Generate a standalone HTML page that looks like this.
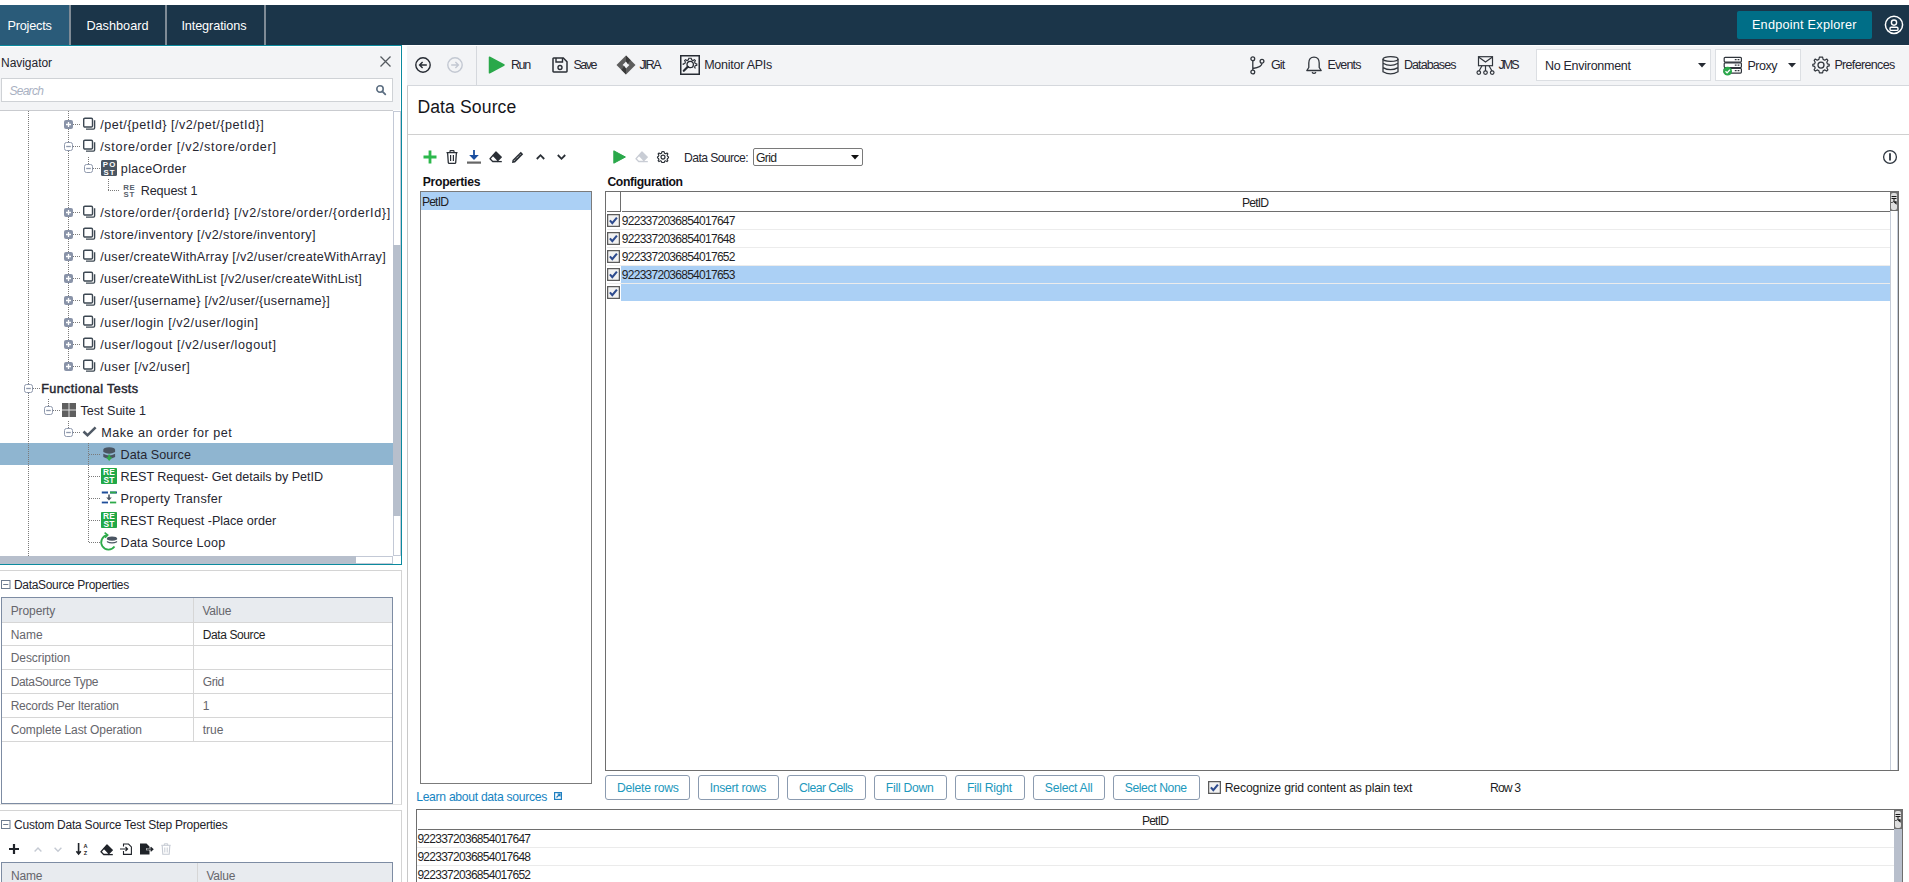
<!DOCTYPE html>
<html><head><meta charset="utf-8"><style>
html,body{margin:0;padding:0;}
body{width:1909px;height:882px;overflow:hidden;position:relative;background:#ffffff;font-family:"Liberation Sans", sans-serif;}
.a{position:absolute;}
.t{white-space:nowrap;}
svg.a{overflow:visible;}
</style></head><body>
<div class="a" style="left:0px;top:0px;width:1909px;height:5px;background:#ffffff;"></div>
<div class="a" style="left:0px;top:5px;width:1909px;height:40px;background:#1b3549;"></div>
<div class="a" style="left:0px;top:5px;width:69px;height:40px;background:#2a5b79;"></div>
<div class="a" style="left:69px;top:5px;width:2px;height:40px;background:#7f8b96;"></div>
<div class="a" style="left:165px;top:5px;width:2px;height:40px;background:#7f8b96;"></div>
<div class="a" style="left:264px;top:5px;width:2px;height:40px;background:#7f8b96;"></div>
<div class="a" style="left:0px;top:45px;width:402px;height:1px;background:#0b8a9e;"></div>
<div class="a" style="left:402px;top:45px;width:1507px;height:1px;background:#ffffff;"></div>
<div class="a t" id="t0" style="letter-spacing:-0.204px;left:7.40px;top:19.80px;font-size:12.7px;line-height:12.7px;color:#ffffff;">Projects</div>
<div class="a t" id="t1" style="letter-spacing:0.005px;left:86.40px;top:19.80px;font-size:12.7px;line-height:12.7px;color:#ffffff;">Dashboard</div>
<div class="a t" id="t2" style="letter-spacing:-0.109px;left:181.40px;top:19.80px;font-size:12.7px;line-height:12.7px;color:#ffffff;">Integrations</div>
<div class="a" style="left:1737px;top:11px;width:135px;height:28px;background:#006e87;border-radius:2px;"></div>
<div class="a t" id="t3" style="letter-spacing:0.235px;left:1751.90px;top:18.80px;font-size:12.7px;line-height:12.7px;color:#ffffff;">Endpoint Explorer</div>
<svg class="a" style="left:1884px;top:15px;" width="20" height="20" viewBox="0 0 20 20"><circle cx="10" cy="9.8" r="8.6" fill="none" stroke="#fff" stroke-width="1.5"/><circle cx="10" cy="7.6" r="2.6" fill="none" stroke="#fff" stroke-width="1.4"/><rect x="6" y="12.2" width="8" height="3.2" rx="1.2" fill="none" stroke="#fff" stroke-width="1.4"/></svg>
<div class="a" style="left:0px;top:46px;width:401px;height:64px;background:#f3f4f6;"></div>
<div class="a" style="left:0px;top:110px;width:393px;height:1px;background:#c9cbcf;"></div>
<div class="a" style="left:0px;top:46px;width:401px;height:1px;background:#ffffff;"></div>
<div class="a" style="left:400px;top:46px;width:1px;height:64px;background:#ffffff;"></div>
<div class="a t" id="t4" style="letter-spacing:-0.037px;left:1.00px;top:57.40px;font-size:12px;line-height:12px;color:#24242c;">Navigator</div>
<svg class="a" style="left:380px;top:56px;" width="11" height="11" viewBox="0 0 11 11"><path d="M0.5 0.5 L10.5 10.5 M10.5 0.5 L0.5 10.5" stroke="#555a60" stroke-width="1.3"/></svg>
<div class="a" style="left:1px;top:78px;width:392px;height:24px;background:#ffffff;border:1px solid #cfd2d6;box-sizing:border-box;"></div>
<div class="a t" id="t5" style="letter-spacing:-0.714px;left:9.40px;top:85.40px;font-size:12px;line-height:12px;color:#a9b1c2;font-style:italic;">Search</div>
<svg class="a" style="left:376px;top:85px;" width="10" height="10" viewBox="0 0 10 10"><circle cx="4" cy="4" r="3.2" fill="none" stroke="#5d6f82" stroke-width="1.6"/><path d="M6.3 6.3 L9.3 9.3" stroke="#5d6f82" stroke-width="1.8" stroke-linecap="round"/></svg>
<div class="a" style="left:0px;top:111px;width:393px;height:445px;background:#ffffff;"></div>
<div class="a" style="left:401px;top:46px;width:1px;height:519px;background:#0b8a9e;"></div>
<div class="a" style="left:0px;top:564px;width:402px;height:1px;background:#0b8a9e;"></div>
<div class="a" style="left:402px;top:46px;width:5px;height:836px;background:#ffffff;"></div>
<div class="a" style="left:393px;top:111px;width:8px;height:445px;background:#ffffff;border:1px solid #c3c9d6;box-sizing:border-box;"></div>
<div class="a" style="left:393px;top:245px;width:8px;height:271px;background:#b7bfcc;"></div>
<div class="a" style="left:0px;top:556px;width:393px;height:8px;background:#ffffff;border:1px solid #c3c9d6;box-sizing:border-box;"></div>
<div class="a" style="left:0px;top:556px;width:356px;height:8px;background:#b7bfcc;"></div>
<div class="a" style="left:393px;top:556px;width:8px;height:8px;background:#ffffff;"></div>
<div class="a" style="left:0px;top:443px;width:393px;height:22px;background:#8fb5d0;"></div>
<div class="a" style="left:28px;top:111px;width:1px;height:445px;background:repeating-linear-gradient(to bottom,#7a7a7a 0,#7a7a7a 1px,transparent 1px,transparent 2px);"></div>
<div class="a" style="left:68px;top:111px;width:1px;height:255px;background:repeating-linear-gradient(to bottom,#7a7a7a 0,#7a7a7a 1px,transparent 1px,transparent 2px);"></div>
<div class="a" style="left:88px;top:157px;width:1px;height:7px;background:repeating-linear-gradient(to bottom,#7a7a7a 0,#7a7a7a 1px,transparent 1px,transparent 2px);"></div>
<div class="a" style="left:108px;top:179px;width:1px;height:11px;background:repeating-linear-gradient(to bottom,#7a7a7a 0,#7a7a7a 1px,transparent 1px,transparent 2px);"></div>
<div class="a" style="left:108px;top:190px;width:12px;height:1px;background:repeating-linear-gradient(to right,#7a7a7a 0,#7a7a7a 1px,transparent 1px,transparent 2px);"></div>
<div class="a" style="left:48px;top:399px;width:1px;height:7px;background:repeating-linear-gradient(to bottom,#7a7a7a 0,#7a7a7a 1px,transparent 1px,transparent 2px);"></div>
<div class="a" style="left:68px;top:421px;width:1px;height:7px;background:repeating-linear-gradient(to bottom,#7a7a7a 0,#7a7a7a 1px,transparent 1px,transparent 2px);"></div>
<div class="a" style="left:88px;top:443px;width:1px;height:100px;background:repeating-linear-gradient(to bottom,#7a7a7a 0,#7a7a7a 1px,transparent 1px,transparent 2px);"></div>
<div class="a" style="left:89px;top:454px;width:11px;height:1px;background:repeating-linear-gradient(to right,#7a7a7a 0,#7a7a7a 1px,transparent 1px,transparent 2px);"></div>
<div class="a" style="left:89px;top:476px;width:11px;height:1px;background:repeating-linear-gradient(to right,#7a7a7a 0,#7a7a7a 1px,transparent 1px,transparent 2px);"></div>
<div class="a" style="left:89px;top:498px;width:11px;height:1px;background:repeating-linear-gradient(to right,#7a7a7a 0,#7a7a7a 1px,transparent 1px,transparent 2px);"></div>
<div class="a" style="left:89px;top:520px;width:11px;height:1px;background:repeating-linear-gradient(to right,#7a7a7a 0,#7a7a7a 1px,transparent 1px,transparent 2px);"></div>
<div class="a" style="left:89px;top:542px;width:11px;height:1px;background:repeating-linear-gradient(to right,#7a7a7a 0,#7a7a7a 1px,transparent 1px,transparent 2px);"></div>
<div class="a" style="left:73px;top:124px;width:8px;height:1px;background:repeating-linear-gradient(to right,#7a7a7a 0,#7a7a7a 1px,transparent 1px,transparent 2px);"></div>
<svg class="a" style="left:64px;top:120px;" width="9" height="9" viewBox="0 0 9 9"><rect x="0" y="0" width="9" height="9" rx="2" fill="#8993a8"/><path d="M2 4.5 H7 M4.5 2 V7" stroke="#fff" stroke-width="1.3"/></svg>
<svg class="a" style="left:83px;top:117px;" width="13" height="13" viewBox="0 0 13 13"><rect x="0.7" y="1.2" width="8.8" height="8.8" rx="1.2" fill="none" stroke="#3d4853" stroke-width="1.4"/><path d="M11.6 3.2 V11 Q11.6 12.1 10.5 12.1 H3" fill="none" stroke="#3d4853" stroke-width="1.4"/></svg>
<div class="a t" id="t6" style="letter-spacing:0.495px;left:100.20px;top:118.89px;font-size:12.6px;line-height:12.6px;color:#262630;">/pet/{petId} [/v2/pet/{petId}]</div>
<div class="a" style="left:73px;top:146px;width:8px;height:1px;background:repeating-linear-gradient(to right,#7a7a7a 0,#7a7a7a 1px,transparent 1px,transparent 2px);"></div>
<svg class="a" style="left:64px;top:142px;" width="9" height="9" viewBox="0 0 9 9"><rect x="0.5" y="0.5" width="8" height="8" rx="2" fill="#fff" stroke="#8f99ad" stroke-width="1"/><path d="M2.2 4.5 H6.8" stroke="#8f99ad" stroke-width="1.3"/></svg>
<svg class="a" style="left:83px;top:139px;" width="13" height="13" viewBox="0 0 13 13"><rect x="0.7" y="1.2" width="8.8" height="8.8" rx="1.2" fill="none" stroke="#3d4853" stroke-width="1.4"/><path d="M11.6 3.2 V11 Q11.6 12.1 10.5 12.1 H3" fill="none" stroke="#3d4853" stroke-width="1.4"/></svg>
<div class="a t" id="t7" style="letter-spacing:0.676px;left:100.20px;top:140.89px;font-size:12.6px;line-height:12.6px;color:#262630;">/store/order [/v2/store/order]</div>
<div class="a" style="left:73px;top:212px;width:8px;height:1px;background:repeating-linear-gradient(to right,#7a7a7a 0,#7a7a7a 1px,transparent 1px,transparent 2px);"></div>
<svg class="a" style="left:64px;top:208px;" width="9" height="9" viewBox="0 0 9 9"><rect x="0" y="0" width="9" height="9" rx="2" fill="#8993a8"/><path d="M2 4.5 H7 M4.5 2 V7" stroke="#fff" stroke-width="1.3"/></svg>
<svg class="a" style="left:83px;top:205px;" width="13" height="13" viewBox="0 0 13 13"><rect x="0.7" y="1.2" width="8.8" height="8.8" rx="1.2" fill="none" stroke="#3d4853" stroke-width="1.4"/><path d="M11.6 3.2 V11 Q11.6 12.1 10.5 12.1 H3" fill="none" stroke="#3d4853" stroke-width="1.4"/></svg>
<div class="a t" id="t8" style="letter-spacing:0.618px;left:100.20px;top:206.89px;font-size:12.6px;line-height:12.6px;color:#262630;">/store/order/{orderId} [/v2/store/order/{orderId}]</div>
<div class="a" style="left:73px;top:234px;width:8px;height:1px;background:repeating-linear-gradient(to right,#7a7a7a 0,#7a7a7a 1px,transparent 1px,transparent 2px);"></div>
<svg class="a" style="left:64px;top:230px;" width="9" height="9" viewBox="0 0 9 9"><rect x="0" y="0" width="9" height="9" rx="2" fill="#8993a8"/><path d="M2 4.5 H7 M4.5 2 V7" stroke="#fff" stroke-width="1.3"/></svg>
<svg class="a" style="left:83px;top:227px;" width="13" height="13" viewBox="0 0 13 13"><rect x="0.7" y="1.2" width="8.8" height="8.8" rx="1.2" fill="none" stroke="#3d4853" stroke-width="1.4"/><path d="M11.6 3.2 V11 Q11.6 12.1 10.5 12.1 H3" fill="none" stroke="#3d4853" stroke-width="1.4"/></svg>
<div class="a t" id="t9" style="letter-spacing:0.430px;left:100.20px;top:228.89px;font-size:12.6px;line-height:12.6px;color:#262630;">/store/inventory [/v2/store/inventory]</div>
<div class="a" style="left:73px;top:256px;width:8px;height:1px;background:repeating-linear-gradient(to right,#7a7a7a 0,#7a7a7a 1px,transparent 1px,transparent 2px);"></div>
<svg class="a" style="left:64px;top:252px;" width="9" height="9" viewBox="0 0 9 9"><rect x="0" y="0" width="9" height="9" rx="2" fill="#8993a8"/><path d="M2 4.5 H7 M4.5 2 V7" stroke="#fff" stroke-width="1.3"/></svg>
<svg class="a" style="left:83px;top:249px;" width="13" height="13" viewBox="0 0 13 13"><rect x="0.7" y="1.2" width="8.8" height="8.8" rx="1.2" fill="none" stroke="#3d4853" stroke-width="1.4"/><path d="M11.6 3.2 V11 Q11.6 12.1 10.5 12.1 H3" fill="none" stroke="#3d4853" stroke-width="1.4"/></svg>
<div class="a t" id="t10" style="letter-spacing:0.312px;left:100.20px;top:250.89px;font-size:12.6px;line-height:12.6px;color:#262630;">/user/createWithArray [/v2/user/createWithArray]</div>
<div class="a" style="left:73px;top:278px;width:8px;height:1px;background:repeating-linear-gradient(to right,#7a7a7a 0,#7a7a7a 1px,transparent 1px,transparent 2px);"></div>
<svg class="a" style="left:64px;top:274px;" width="9" height="9" viewBox="0 0 9 9"><rect x="0" y="0" width="9" height="9" rx="2" fill="#8993a8"/><path d="M2 4.5 H7 M4.5 2 V7" stroke="#fff" stroke-width="1.3"/></svg>
<svg class="a" style="left:83px;top:271px;" width="13" height="13" viewBox="0 0 13 13"><rect x="0.7" y="1.2" width="8.8" height="8.8" rx="1.2" fill="none" stroke="#3d4853" stroke-width="1.4"/><path d="M11.6 3.2 V11 Q11.6 12.1 10.5 12.1 H3" fill="none" stroke="#3d4853" stroke-width="1.4"/></svg>
<div class="a t" id="t11" style="letter-spacing:0.261px;left:100.20px;top:272.89px;font-size:12.6px;line-height:12.6px;color:#262630;">/user/createWithList [/v2/user/createWithList]</div>
<div class="a" style="left:73px;top:300px;width:8px;height:1px;background:repeating-linear-gradient(to right,#7a7a7a 0,#7a7a7a 1px,transparent 1px,transparent 2px);"></div>
<svg class="a" style="left:64px;top:296px;" width="9" height="9" viewBox="0 0 9 9"><rect x="0" y="0" width="9" height="9" rx="2" fill="#8993a8"/><path d="M2 4.5 H7 M4.5 2 V7" stroke="#fff" stroke-width="1.3"/></svg>
<svg class="a" style="left:83px;top:293px;" width="13" height="13" viewBox="0 0 13 13"><rect x="0.7" y="1.2" width="8.8" height="8.8" rx="1.2" fill="none" stroke="#3d4853" stroke-width="1.4"/><path d="M11.6 3.2 V11 Q11.6 12.1 10.5 12.1 H3" fill="none" stroke="#3d4853" stroke-width="1.4"/></svg>
<div class="a t" id="t12" style="letter-spacing:0.283px;left:100.20px;top:294.89px;font-size:12.6px;line-height:12.6px;color:#262630;">/user/{username} [/v2/user/{username}]</div>
<div class="a" style="left:73px;top:322px;width:8px;height:1px;background:repeating-linear-gradient(to right,#7a7a7a 0,#7a7a7a 1px,transparent 1px,transparent 2px);"></div>
<svg class="a" style="left:64px;top:318px;" width="9" height="9" viewBox="0 0 9 9"><rect x="0" y="0" width="9" height="9" rx="2" fill="#8993a8"/><path d="M2 4.5 H7 M4.5 2 V7" stroke="#fff" stroke-width="1.3"/></svg>
<svg class="a" style="left:83px;top:315px;" width="13" height="13" viewBox="0 0 13 13"><rect x="0.7" y="1.2" width="8.8" height="8.8" rx="1.2" fill="none" stroke="#3d4853" stroke-width="1.4"/><path d="M11.6 3.2 V11 Q11.6 12.1 10.5 12.1 H3" fill="none" stroke="#3d4853" stroke-width="1.4"/></svg>
<div class="a t" id="t13" style="letter-spacing:0.533px;left:100.20px;top:316.89px;font-size:12.6px;line-height:12.6px;color:#262630;">/user/login [/v2/user/login]</div>
<div class="a" style="left:73px;top:344px;width:8px;height:1px;background:repeating-linear-gradient(to right,#7a7a7a 0,#7a7a7a 1px,transparent 1px,transparent 2px);"></div>
<svg class="a" style="left:64px;top:340px;" width="9" height="9" viewBox="0 0 9 9"><rect x="0" y="0" width="9" height="9" rx="2" fill="#8993a8"/><path d="M2 4.5 H7 M4.5 2 V7" stroke="#fff" stroke-width="1.3"/></svg>
<svg class="a" style="left:83px;top:337px;" width="13" height="13" viewBox="0 0 13 13"><rect x="0.7" y="1.2" width="8.8" height="8.8" rx="1.2" fill="none" stroke="#3d4853" stroke-width="1.4"/><path d="M11.6 3.2 V11 Q11.6 12.1 10.5 12.1 H3" fill="none" stroke="#3d4853" stroke-width="1.4"/></svg>
<div class="a t" id="t14" style="letter-spacing:0.579px;left:100.20px;top:338.89px;font-size:12.6px;line-height:12.6px;color:#262630;">/user/logout [/v2/user/logout]</div>
<div class="a" style="left:73px;top:366px;width:8px;height:1px;background:repeating-linear-gradient(to right,#7a7a7a 0,#7a7a7a 1px,transparent 1px,transparent 2px);"></div>
<svg class="a" style="left:64px;top:362px;" width="9" height="9" viewBox="0 0 9 9"><rect x="0" y="0" width="9" height="9" rx="2" fill="#8993a8"/><path d="M2 4.5 H7 M4.5 2 V7" stroke="#fff" stroke-width="1.3"/></svg>
<svg class="a" style="left:83px;top:359px;" width="13" height="13" viewBox="0 0 13 13"><rect x="0.7" y="1.2" width="8.8" height="8.8" rx="1.2" fill="none" stroke="#3d4853" stroke-width="1.4"/><path d="M11.6 3.2 V11 Q11.6 12.1 10.5 12.1 H3" fill="none" stroke="#3d4853" stroke-width="1.4"/></svg>
<div class="a t" id="t15" style="letter-spacing:0.421px;left:100.20px;top:360.89px;font-size:12.6px;line-height:12.6px;color:#262630;">/user [/v2/user]</div>
<div class="a" style="left:93px;top:168px;width:8px;height:1px;background:repeating-linear-gradient(to right,#7a7a7a 0,#7a7a7a 1px,transparent 1px,transparent 2px);"></div>
<svg class="a" style="left:84px;top:164px;" width="9" height="9" viewBox="0 0 9 9"><rect x="0.5" y="0.5" width="8" height="8" rx="2" fill="#fff" stroke="#8f99ad" stroke-width="1"/><path d="M2.2 4.5 H6.8" stroke="#8f99ad" stroke-width="1.3"/></svg>
<svg class="a" style="left:101px;top:160px;" width="16" height="16" viewBox="0 0 16 16"><rect x="0" y="0" width="16" height="16" rx="1.5" fill="#4a5562"/><text x="8.6" y="7.3" font-family="Liberation Sans" font-weight="700" font-size="7.8" fill="#fff" text-anchor="middle" letter-spacing="1.1">PO</text><text x="8.6" y="14.9" font-family="Liberation Sans" font-weight="700" font-size="7.8" fill="#fff" text-anchor="middle" letter-spacing="1.1">ST</text></svg>
<div class="a t" id="t16" style="letter-spacing:0.333px;left:120.80px;top:162.89px;font-size:12.6px;line-height:12.6px;color:#262630;">placeOrder</div>
<svg class="a" style="left:123px;top:183px;" width="12" height="15" viewBox="0 0 12 15"><text x="6.4" y="6.6" font-family="Liberation Sans" font-weight="700" font-size="7.8" fill="#56606b" text-anchor="middle" letter-spacing="0.8">RE</text><text x="6.4" y="14.2" font-family="Liberation Sans" font-weight="700" font-size="7.8" fill="#56606b" text-anchor="middle" letter-spacing="0.8">ST</text></svg>
<div class="a t" id="t17" style="letter-spacing:-0.089px;left:140.70px;top:184.89px;font-size:12.6px;line-height:12.6px;color:#262630;">Request 1</div>
<div class="a" style="left:33px;top:388px;width:8px;height:1px;background:repeating-linear-gradient(to right,#7a7a7a 0,#7a7a7a 1px,transparent 1px,transparent 2px);"></div>
<svg class="a" style="left:24px;top:384px;" width="9" height="9" viewBox="0 0 9 9"><rect x="0.5" y="0.5" width="8" height="8" rx="2" fill="#fff" stroke="#8f99ad" stroke-width="1"/><path d="M2.2 4.5 H6.8" stroke="#8f99ad" stroke-width="1.3"/></svg>
<div class="a t" id="t18" style="letter-spacing:0.408px;left:41.20px;top:382.89px;font-size:12.6px;line-height:12.6px;color:#262630;-webkit-text-stroke:0.45px #262630;">Functional Tests</div>
<div class="a" style="left:53px;top:410px;width:8px;height:1px;background:repeating-linear-gradient(to right,#7a7a7a 0,#7a7a7a 1px,transparent 1px,transparent 2px);"></div>
<svg class="a" style="left:44px;top:406px;" width="9" height="9" viewBox="0 0 9 9"><rect x="0.5" y="0.5" width="8" height="8" rx="2" fill="#fff" stroke="#8f99ad" stroke-width="1"/><path d="M2.2 4.5 H6.8" stroke="#8f99ad" stroke-width="1.3"/></svg>
<svg class="a" style="left:62px;top:403px;" width="14" height="14" viewBox="0 0 14 14"><rect x="0" y="0" width="14" height="14" fill="#e2e2e2"/><rect x="0" y="0" width="6.5" height="6.5" fill="#5f5f5f"/><rect x="7.5" y="0" width="6.5" height="6.5" fill="#5f5f5f"/><rect x="0" y="7.5" width="6.5" height="6.5" fill="#5f5f5f"/><rect x="7.5" y="7.5" width="6.5" height="6.5" fill="#5f5f5f"/></svg>
<div class="a t" id="t19" style="letter-spacing:-0.019px;left:80.50px;top:404.89px;font-size:12.6px;line-height:12.6px;color:#262630;">Test Suite 1</div>
<div class="a" style="left:73px;top:432px;width:8px;height:1px;background:repeating-linear-gradient(to right,#7a7a7a 0,#7a7a7a 1px,transparent 1px,transparent 2px);"></div>
<svg class="a" style="left:64px;top:428px;" width="9" height="9" viewBox="0 0 9 9"><rect x="0.5" y="0.5" width="8" height="8" rx="2" fill="#fff" stroke="#8f99ad" stroke-width="1"/><path d="M2.2 4.5 H6.8" stroke="#8f99ad" stroke-width="1.3"/></svg>
<svg class="a" style="left:82px;top:426px;" width="15" height="11" viewBox="0 0 15 11"><path d="M1.5 5.5 L5.5 9.3 L13.6 1.3" fill="none" stroke="#505a66" stroke-width="2.6" stroke-linejoin="miter"/></svg>
<div class="a t" id="t20" style="letter-spacing:0.505px;left:101.20px;top:426.89px;font-size:12.6px;line-height:12.6px;color:#262630;">Make an order for pet</div>
<svg class="a" style="left:103px;top:447px;" width="13" height="15" viewBox="0 0 13 15"><path d="M0.3 2.8 V5 Q6.2 8.6 12.1 5 V2.8 Q12.1 0.2 6.2 0.2 Q0.3 0.2 0.3 2.8Z" fill="#4a5562"/><path d="M0.3 6.8 V10 Q6.2 13.6 12.1 10 V6.8 Q6.2 10.4 0.3 6.8Z" fill="#4a5562"/><path d="M6.2 7.6 V11.5" stroke="#2eaa4a" stroke-width="2"/><path d="M3 10.2 L6.2 14 L9.4 10.2Z" fill="#2eaa4a"/></svg>
<div class="a t" id="t21" style="letter-spacing:0.029px;left:120.60px;top:448.89px;font-size:12.6px;line-height:12.6px;color:#262630;">Data Source</div>
<svg class="a" style="left:101px;top:468px;" width="16" height="16" viewBox="0 0 16 16"><rect x="0" y="0" width="16" height="16" rx="0.8" fill="#21a847"/><text x="8.1" y="7.3" font-family="Liberation Sans" font-weight="700" font-size="8.4" fill="#fff" text-anchor="middle" letter-spacing="0.2">RE</text><text x="8.1" y="14.8" font-family="Liberation Sans" font-weight="700" font-size="8.4" fill="#fff" text-anchor="middle" letter-spacing="0.2">ST</text></svg>
<div class="a t" id="t22" style="letter-spacing:-0.029px;left:120.60px;top:470.89px;font-size:12.6px;line-height:12.6px;color:#262630;">REST Request- Get details by PetID</div>
<svg class="a" style="left:101px;top:491.4px;" width="16" height="16" viewBox="0 0 16 16"><path d="M0.8 1.5 H7 M16 1.5 H9" stroke="#1f4e9a" stroke-width="1.8"/><path d="M9 1.5 H15.2" stroke="#2eaa4a" stroke-width="1.8"/><path d="M0.8 11.5 H7" stroke="#1f4e9a" stroke-width="1.8"/><path d="M9 11.5 H15.2" stroke="#2eaa4a" stroke-width="1.8"/><path d="M8 3.5 V7.5" stroke="#4a5562" stroke-width="1.6"/><path d="M5.2 6.5 L8 9.6 L10.8 6.5Z" fill="#4a5562"/></svg>
<div class="a t" id="t23" style="letter-spacing:0.269px;left:120.60px;top:492.89px;font-size:12.6px;line-height:12.6px;color:#262630;">Property Transfer</div>
<svg class="a" style="left:101px;top:512px;" width="16" height="16" viewBox="0 0 16 16"><rect x="0" y="0" width="16" height="16" rx="0.8" fill="#21a847"/><text x="8.1" y="7.3" font-family="Liberation Sans" font-weight="700" font-size="8.4" fill="#fff" text-anchor="middle" letter-spacing="0.2">RE</text><text x="8.1" y="14.8" font-family="Liberation Sans" font-weight="700" font-size="8.4" fill="#fff" text-anchor="middle" letter-spacing="0.2">ST</text></svg>
<div class="a t" id="t24" style="letter-spacing:-0.011px;left:120.60px;top:514.89px;font-size:12.6px;line-height:12.6px;color:#262630;">REST Request -Place order</div>
<svg class="a" style="left:100px;top:534px;" width="18" height="17" viewBox="0 0 18 17"><path d="M7.2 1.1 A7.3 7.3 0 1 0 14.5 12.5" fill="none" stroke="#2eaa4a" stroke-width="1.8"/><path d="M4.6 -1.3 L7.7 1.1 L5 3.8" fill="none" stroke="#2eaa4a" stroke-width="1.6"/><path d="M6.9 4.6 Q6.9 2.4 12 2.4 Q17.1 2.4 17.1 4.6 V5.4 Q12 8 6.9 5.4Z" fill="#4a5562"/><path d="M6.9 6.9 V8.2 Q12 10.8 17.1 8.2 V6.9 Q12 9.5 6.9 6.9Z" fill="#4a5562"/></svg>
<div class="a t" id="t25" style="letter-spacing:0.205px;left:120.60px;top:536.89px;font-size:12.6px;line-height:12.6px;color:#262630;">Data Source Loop</div>
<div class="a" style="left:407px;top:46px;width:1502px;height:39px;background:#f3f4f6;"></div>
<div class="a" style="left:407px;top:85px;width:1502px;height:1px;background:#d5d8dd;"></div>
<div class="a" style="left:407px;top:86px;width:1px;height:796px;background:#c8c8c8;"></div>
<div class="a" style="left:476px;top:46px;width:1px;height:39px;background:#d5d8dd;"></div>
<svg class="a" style="left:415px;top:57px;" width="16" height="16" viewBox="0 0 16 16"><circle cx="8" cy="8" r="7.2" fill="none" stroke="#262b33" stroke-width="1.4"/><path d="M11.8 8 H4.6 M7.6 5 L4.6 8 L7.6 11" fill="none" stroke="#262b33" stroke-width="1.4"/></svg>
<svg class="a" style="left:447px;top:57px;" width="16" height="16" viewBox="0 0 16 16"><circle cx="8" cy="8" r="7.2" fill="none" stroke="#c3c8d2" stroke-width="1.4"/><path d="M4.2 8 H11.4 M8.4 5 L11.4 8 L8.4 11" fill="none" stroke="#c3c8d2" stroke-width="1.4"/></svg>
<svg class="a" style="left:488px;top:56px;" width="17" height="18" viewBox="0 0 17 18"><path d="M1.5 1.2 L16 9 L1.5 16.8 Z" fill="#2aa84a" stroke="#2aa84a" stroke-width="1.5" stroke-linejoin="round"/></svg>
<div class="a t" id="t26" style="letter-spacing:-1.419px;left:511.00px;top:59.48px;font-size:12.5px;line-height:12.5px;color:#262630;">Run</div>
<svg class="a" style="left:552px;top:57px;" width="16" height="16" viewBox="0 0 16 16"><path d="M1.7 1 H11.3 L15 4.7 V14.3 Q15 15 14.3 15 H1.7 Q1 15 1 14.3 V1.7 Q1 1 1.7 1Z" fill="none" stroke="#2b2f36" stroke-width="1.5"/><path d="M4 1 V5 H10.5 V1" fill="none" stroke="#2b2f36" stroke-width="1.4"/><circle cx="8" cy="10.5" r="2" fill="none" stroke="#2b2f36" stroke-width="1.4"/></svg>
<div class="a t" id="t27" style="letter-spacing:-1.467px;left:573.40px;top:59.48px;font-size:12.5px;line-height:12.5px;color:#262630;">Save</div>
<svg class="a" style="left:616px;top:55px;" width="20" height="20" viewBox="0 0 20 20"><path d="M10 0.5 L19.5 10 L10 19.5 L0.5 10 Z" fill="#5d5d5d"/><path d="M10 6.6 L13.4 10 L10 13.4 L6.6 10 Z" fill="#f3f4f6"/><path d="M10 0.5 L14.7 5.2 Q11.5 8 12.5 10 L10 6.6 Z" fill="#3a3a3a"/><path d="M10 19.5 L5.3 14.8 Q8.5 12 7.5 10 L10 13.4 Z" fill="#3a3a3a"/></svg>
<div class="a t" id="t28" style="letter-spacing:-1.665px;left:639.40px;top:59.48px;font-size:12.5px;line-height:12.5px;color:#262630;">JIRA</div>
<svg class="a" style="left:680px;top:55px;" width="20" height="20" viewBox="0 0 20 20"><rect x="0.75" y="0.75" width="18.5" height="18.5" fill="none" stroke="#262b33" stroke-width="1.5"/><path d="M10 3.2 L11.2 3.2 L11.6 4.8 L13.1 5.5 L14.5 4.6 L15.4 5.5 L14.6 7 L15.2 8.5 L16.8 8.9 V10.2 L15.2 10.6 L14.6 12.1 L15.4 13.5" fill="none" stroke="#262b33" stroke-width="1.1"/><circle cx="10.2" cy="9.5" r="3.2" fill="none" stroke="#262b33" stroke-width="1.3"/><path d="M7.8 11.8 L3.8 15.8" stroke="#262b33" stroke-width="2.2" stroke-linecap="round"/><path d="M10 3.2 L8.8 3.2 L8.4 4.8 L6.9 5.5 L5.5 4.6 L4.6 5.5 L5.4 7 L4.8 8.5 L3.2 8.9 V10" fill="none" stroke="#262b33" stroke-width="1.1"/></svg>
<div class="a t" id="t29" style="letter-spacing:-0.252px;left:704.20px;top:59.48px;font-size:12.5px;line-height:12.5px;color:#262630;">Monitor APIs</div>
<svg class="a" style="left:1250px;top:56px;" width="15" height="19" viewBox="0 0 15 19"><circle cx="2.8" cy="2.8" r="1.9" fill="none" stroke="#30353c" stroke-width="1.3"/><circle cx="2.8" cy="16" r="1.9" fill="none" stroke="#30353c" stroke-width="1.3"/><circle cx="12" cy="5.3" r="1.9" fill="none" stroke="#30353c" stroke-width="1.3"/><path d="M2.8 4.7 V14.1 M12 7.2 Q12 11 2.8 12.5" fill="none" stroke="#30353c" stroke-width="1.3"/></svg>
<div class="a t" id="t30" style="letter-spacing:-0.942px;left:1271.10px;top:59.48px;font-size:12.5px;line-height:12.5px;color:#262630;">Git</div>
<svg class="a" style="left:1306px;top:56px;" width="16" height="19" viewBox="0 0 16 19"><path d="M8 1.2 Q13.2 1.2 13.2 7 V11.5 L15.2 14.5 H0.8 L2.8 11.5 V7 Q2.8 1.2 8 1.2Z" fill="none" stroke="#30353c" stroke-width="1.3" stroke-linejoin="round"/><path d="M6 16.2 Q8 18.5 10 16.2" fill="none" stroke="#30353c" stroke-width="1.3"/></svg>
<div class="a t" id="t31" style="letter-spacing:-0.824px;left:1327.40px;top:59.48px;font-size:12.5px;line-height:12.5px;color:#262630;">Events</div>
<svg class="a" style="left:1382px;top:56px;" width="17" height="19" viewBox="0 0 17 19"><ellipse cx="8.5" cy="3" rx="7.5" ry="2.4" fill="none" stroke="#30353c" stroke-width="1.3"/><path d="M1 3 V15.8 Q8.5 20 16 15.8 V3 M1 7.3 Q8.5 11.5 16 7.3 M1 11.6 Q8.5 15.8 16 11.6" fill="none" stroke="#30353c" stroke-width="1.3"/></svg>
<div class="a t" id="t32" style="letter-spacing:-0.896px;left:1403.90px;top:59.48px;font-size:12.5px;line-height:12.5px;color:#262630;">Databases</div>
<svg class="a" style="left:1476px;top:56px;" width="19" height="19" viewBox="0 0 19 19"><rect x="2.5" y="0.7" width="14" height="9" fill="none" stroke="#30353c" stroke-width="1.2"/><path d="M2.5 0.9 L9.5 6 L16.5 0.9 M9.5 9.7 V15 M6 9.7 L3 15 M13 9.7 L16 15" fill="none" stroke="#30353c" stroke-width="1.2"/><circle cx="2.8" cy="16.6" r="1.8" fill="none" stroke="#30353c" stroke-width="1.2"/><circle cx="9.5" cy="16.6" r="1.8" fill="none" stroke="#30353c" stroke-width="1.2"/><circle cx="16.2" cy="16.6" r="1.8" fill="none" stroke="#30353c" stroke-width="1.2"/></svg>
<div class="a t" id="t33" style="letter-spacing:-1.950px;left:1498.40px;top:59.48px;font-size:12.5px;line-height:12.5px;color:#262630;">JMS</div>
<div class="a" style="left:1536px;top:49px;width:175px;height:32px;background:#ffffff;border:1px solid #dcdfe3;box-sizing:border-box;"></div>
<div class="a t" id="t34" style="letter-spacing:-0.271px;left:1544.90px;top:59.98px;font-size:12.5px;line-height:12.5px;color:#262630;">No Environment</div>
<svg class="a" style="left:1698px;top:63px;" width="8" height="5" viewBox="0 0 8 5"><path d="M0 0 H8 L4 4.5Z" fill="#262b33"/></svg>
<div class="a" style="left:1715px;top:49px;width:86px;height:32px;background:#ffffff;border:1px solid #dcdfe3;box-sizing:border-box;"></div>
<svg class="a" style="left:1723px;top:56px;" width="20" height="20" viewBox="0 0 20 20"><rect x="1.2" y="1.3" width="17.2" height="4.8" rx="1" fill="none" stroke="#30353c" stroke-width="1.2"/><rect x="1.2" y="6.8" width="17.2" height="4.8" rx="1" fill="none" stroke="#30353c" stroke-width="1.2"/><rect x="1.2" y="12.3" width="17.2" height="4.8" rx="1" fill="none" stroke="#30353c" stroke-width="1.2"/><path d="M11.8 3.7 H13.6 M14.6 3.7 H16.4 M11.8 9.2 H13.6 M14.6 9.2 H16.4 M11.8 14.7 H13.6 M14.6 14.7 H16.4" stroke="#30353c" stroke-width="1.3"/><circle cx="4.6" cy="15.2" r="4.4" fill="#2aa84a"/><path d="M2.5 15.2 L4.1 16.9 L6.9 13.8" fill="none" stroke="#fff" stroke-width="1.3"/></svg>
<div class="a t" id="t35" style="letter-spacing:-0.463px;left:1747.40px;top:59.98px;font-size:12.5px;line-height:12.5px;color:#262630;">Proxy</div>
<svg class="a" style="left:1788px;top:63px;" width="8" height="5" viewBox="0 0 8 5"><path d="M0 0 H8 L4 4.5Z" fill="#262b33"/></svg>
<svg class="a" style="left:1812px;top:56px;" width="18" height="18" viewBox="0 0 18 18"><path d="M9 1 L10.6 1.2 L11.1 3.4 L12.8 4.2 L14.7 3 L15.9 4.3 L14.8 6.2 L15.5 7.9 L17.2 8.3 V9.9 L15.5 10.3 L14.8 12 L15.9 13.8 L14.7 15.1 L12.8 13.9 L11.1 14.7 L10.6 16.9 H7.4 L6.9 14.7 L5.2 13.9 L3.3 15.1 L2.1 13.8 L3.2 12 L2.5 10.3 L0.8 9.9 V8.3 L2.5 7.9 L3.2 6.2 L2.1 4.3 L3.3 3 L5.2 4.2 L6.9 3.4 L7.4 1.2 Z" fill="none" stroke="#30353c" stroke-width="1.2" stroke-linejoin="round"/><circle cx="9" cy="9.1" r="3" fill="none" stroke="#30353c" stroke-width="1.3"/></svg>
<div class="a t" id="t36" style="letter-spacing:-0.661px;left:1834.40px;top:59.48px;font-size:12.5px;line-height:12.5px;color:#262630;">Preferences</div>
<div class="a" style="left:408px;top:86px;width:1501px;height:48px;background:#ffffff;"></div>
<div class="a" style="left:408px;top:134px;width:1501px;height:1px;background:#d0d0d0;"></div>
<div class="a t" id="t37" style="letter-spacing:0.111px;left:417.40px;top:98.64px;font-size:17.6px;line-height:17.6px;color:#15151a;">Data Source</div>
<svg class="a" style="left:423px;top:150px;" width="14" height="14" viewBox="0 0 14 14"><path d="M7 0.5 V13.5 M0.5 7 H13.5" stroke="#2db84c" stroke-width="2.8"/></svg>
<svg class="a" style="left:446px;top:150px;" width="12" height="14" viewBox="0 0 12 14"><path d="M0.5 2.6 H11.5 M4 2.6 V1.2 Q4 0.6 4.6 0.6 H7.4 Q8 0.6 8 1.2 V2.6" fill="none" stroke="#2a2f36" stroke-width="1.2"/><path d="M1.6 2.8 L2.3 12.6 Q2.4 13.4 3.2 13.4 H8.8 Q9.6 13.4 9.7 12.6 L10.4 2.8" fill="none" stroke="#2a2f36" stroke-width="1.3"/><path d="M4.6 5 V11 M7.4 5 V11" stroke="#2a2f36" stroke-width="1.2"/></svg>
<svg class="a" style="left:467px;top:150px;" width="14" height="14" viewBox="0 0 14 14"><path d="M7 0 V8" stroke="#1a4ea0" stroke-width="1.8"/><path d="M2.2 5 L7 10 L11.8 5Z" fill="#1a4ea0"/><rect x="0" y="11.5" width="14" height="2.2" fill="#666"/></svg>
<svg class="a" style="left:489px;top:151px;" width="13" height="12" viewBox="0 0 13 12"><path d="M7 0.9 L12.3 6.1 L7.9 10.5 H3.7 L1 7.8 Z" fill="#fff" stroke="#2a2f36" stroke-width="1.3" stroke-linejoin="round"/><path d="M7 0.9 L12.3 6.1 L8.5 9.9 L3.3 4.6 Z" fill="#2a2f36"/><path d="M7.9 10.6 H12.8" stroke="#2a2f36" stroke-width="1.3"/></svg>
<svg class="a" style="left:511px;top:151px;" width="13" height="13" viewBox="0 0 13 13"><path d="M1 12 L1.5 9 L9.8 0.8 L12.2 3.2 L4 11.5 Z" fill="#2a2f36"/><path d="M3 9.8 L10 2.8" stroke="#fff" stroke-width="0.9" stroke-dasharray="1 1"/></svg>
<svg class="a" style="left:536px;top:154px;" width="9" height="6" viewBox="0 0 9 6"><path d="M0.8 5 L4.5 1.2 L8.2 5" fill="none" stroke="#2a2f36" stroke-width="1.8"/></svg>
<svg class="a" style="left:557px;top:154px;" width="9" height="6" viewBox="0 0 9 6"><path d="M0.8 1 L4.5 4.8 L8.2 1" fill="none" stroke="#2a2f36" stroke-width="1.8"/></svg>
<svg class="a" style="left:613px;top:150px;" width="13" height="14" viewBox="0 0 13 14"><path d="M0.8 0.8 L12.4 7 L0.8 13.2 Z" fill="#2aa84a" stroke="#2aa84a" stroke-width="1" stroke-linejoin="round"/></svg>
<svg class="a" style="left:635px;top:151px;" width="13" height="12" viewBox="0 0 13 12"><path d="M7 0.9 L12.3 6.1 L7.9 10.5 H3.7 L1 7.8 Z" fill="#fff" stroke="#c9cdd5" stroke-width="1.3" stroke-linejoin="round"/><path d="M7 0.9 L12.3 6.1 L8.5 9.9 L3.3 4.6 Z" fill="#c9cdd5"/><path d="M7.9 10.6 H12.8" stroke="#c9cdd5" stroke-width="1.3"/></svg>
<svg class="a" style="left:657px;top:151px;" width="12" height="12" viewBox="0 0 12 12"><path d="M6 0.6 L7.2 0.8 L7.5 2.3 L8.7 2.8 L10 2 L10.9 2.9 L10.1 4.2 L10.6 5.4 L11.5 5.7 V7 L10.6 7.2 L10.1 8.4 L10.9 9.7 L10 10.6 L8.7 9.8 L7.5 10.3 L7.2 11.5 H4.8 L4.5 10.3 L3.3 9.8 L2 10.6 L1.1 9.7 L1.9 8.4 L1.4 7.2 L0.5 7 V5.7 L1.4 5.4 L1.9 4.2 L1.1 2.9 L2 2 L3.3 2.8 L4.5 2.3 L4.8 0.8 Z" fill="none" stroke="#2a2f36" stroke-width="1.1" stroke-linejoin="round"/><circle cx="6" cy="6.1" r="2" fill="none" stroke="#2a2f36" stroke-width="1.2"/></svg>
<div class="a t" id="t38" style="letter-spacing:-0.597px;left:684.00px;top:152.23px;font-size:12.2px;line-height:12.2px;color:#262630;">Data Source:</div>
<div class="a" style="left:753px;top:148px;width:110px;height:18px;background:#ffffff;border:1px solid #7a7a7a;box-sizing:border-box;border-radius:2px;"></div>
<div class="a t" id="t39" style="letter-spacing:-0.652px;left:755.90px;top:152.23px;font-size:12.2px;line-height:12.2px;color:#1e1e24;">Grid</div>
<svg class="a" style="left:851px;top:155px;" width="8" height="5" viewBox="0 0 8 5"><path d="M0 0 H8 L4 4.5Z" fill="#111"/></svg>
<svg class="a" style="left:1883px;top:150px;" width="15" height="15" viewBox="0 0 15 15"><circle cx="7" cy="7" r="6.4" fill="none" stroke="#2e3640" stroke-width="1.3"/><path d="M7 3.2 V10.6" stroke="#2e3640" stroke-width="1.8"/></svg>
<div class="a t" id="t40" style="letter-spacing:-0.280px;left:422.70px;top:175.73px;font-size:12.2px;line-height:12.2px;color:#111116;font-weight:700;">Properties</div>
<div class="a t" id="t41" style="letter-spacing:-0.360px;left:607.40px;top:176.23px;font-size:12.2px;line-height:12.2px;color:#111116;font-weight:700;">Configuration</div>
<div class="a" style="left:420px;top:191px;width:172px;height:593px;background:#ffffff;border:1px solid #7b7b7b;box-sizing:border-box;"></div>
<div class="a" style="left:421px;top:192px;width:170px;height:18px;background:#abd0f5;"></div>
<div class="a t" id="t42" style="letter-spacing:-0.852px;left:421.90px;top:196.23px;font-size:12.2px;line-height:12.2px;color:#1e1e24;">PetID</div>
<div class="a" style="left:605px;top:191px;width:294px;height:1px;background:#6e6e6e;"></div>
<div class="a" style="left:605px;top:191px;width:1px;height:580px;background:#6e6e6e;"></div>
<div class="a" style="left:605px;top:770px;width:294px;height:1px;background:#6e6e6e;"></div>
<div class="a" style="left:898px;top:191px;width:1px;height:580px;background:#6e6e6e;"></div>
<div class="a" style="left:605px;top:191px;width:1294px;height:580px;background:#ffffff;border:1px solid #6e6e6e;box-sizing:border-box;"></div>
<div class="a" style="left:607px;top:211px;width:14px;height:1px;background:#6e6e6e;"></div>
<div class="a" style="left:622px;top:211px;width:1268px;height:1px;background:#6e6e6e;"></div>
<div class="a" style="left:620px;top:192px;width:1px;height:20px;background:#6e6e6e;"></div>
<div class="a t" id="t43" style="letter-spacing:-0.852px;left:1242.00px;top:197.23px;font-size:12.2px;line-height:12.2px;color:#1e1e24;">PetID</div>
<div class="a" style="left:1890px;top:192px;width:8px;height:578px;background:#ffffff;border-left:1px solid #c6cdd9;border-right:1px solid #c6cdd9;box-sizing:border-box;"></div>
<div class="a" style="left:1890px;top:192px;width:8px;height:19px;background:#6e6e6e;"></div>
<svg class="a" style="left:1891px;top:193px;" width="6" height="17" viewBox="0 0 6 17"><rect x="0" y="0" width="6" height="17" rx="2" fill="#dedede"/><path d="M0.5 3.5 H5.5 M0.5 5.5 H5.5 M3 5.5 V8.5" stroke="#1a1a1a" stroke-width="1"/><path d="M1.5 8.2 L5.6 11.8 L5.6 8.2Z" fill="#1a1a1a"/><path d="M0.3 9.5 H1.6" stroke="#1a1a1a" stroke-width="1"/></svg>
<div class="a" style="left:607px;top:229px;width:1283px;height:1px;background:#ececec;"></div>
<svg class="a" style="left:607px;top:214px;" width="13" height="13" viewBox="0 0 13 13"><rect x="0.65" y="0.65" width="11.7" height="11.7" fill="#fff" stroke="#5c5c5c" stroke-width="1.3"/><rect x="2" y="2" width="9" height="9" fill="#f2f2f2"/><path d="M2.9 6.4 L5.3 9.2 L9.9 3.6" fill="none" stroke="#2d4b8e" stroke-width="2.1"/></svg>
<div class="a t" id="t44" style="letter-spacing:-0.731px;left:621.80px;top:215.00px;font-size:12px;line-height:12px;color:#1e1e24;">9223372036854017647</div>
<div class="a" style="left:607px;top:247px;width:1283px;height:1px;background:#ececec;"></div>
<svg class="a" style="left:607px;top:232px;" width="13" height="13" viewBox="0 0 13 13"><rect x="0.65" y="0.65" width="11.7" height="11.7" fill="#fff" stroke="#5c5c5c" stroke-width="1.3"/><rect x="2" y="2" width="9" height="9" fill="#f2f2f2"/><path d="M2.9 6.4 L5.3 9.2 L9.9 3.6" fill="none" stroke="#2d4b8e" stroke-width="2.1"/></svg>
<div class="a t" id="t45" style="letter-spacing:-0.731px;left:621.80px;top:233.00px;font-size:12px;line-height:12px;color:#1e1e24;">9223372036854017648</div>
<div class="a" style="left:607px;top:265px;width:1283px;height:1px;background:#ececec;"></div>
<svg class="a" style="left:607px;top:250px;" width="13" height="13" viewBox="0 0 13 13"><rect x="0.65" y="0.65" width="11.7" height="11.7" fill="#fff" stroke="#5c5c5c" stroke-width="1.3"/><rect x="2" y="2" width="9" height="9" fill="#f2f2f2"/><path d="M2.9 6.4 L5.3 9.2 L9.9 3.6" fill="none" stroke="#2d4b8e" stroke-width="2.1"/></svg>
<div class="a t" id="t46" style="letter-spacing:-0.731px;left:621.80px;top:251.00px;font-size:12px;line-height:12px;color:#1e1e24;">9223372036854017652</div>
<div class="a" style="left:621px;top:266px;width:1269px;height:17px;background:#abd0f5;"></div>
<div class="a" style="left:607px;top:283px;width:1283px;height:1px;background:#ececec;"></div>
<svg class="a" style="left:607px;top:268px;" width="13" height="13" viewBox="0 0 13 13"><rect x="0.65" y="0.65" width="11.7" height="11.7" fill="#fff" stroke="#5c5c5c" stroke-width="1.3"/><rect x="2" y="2" width="9" height="9" fill="#f2f2f2"/><path d="M2.9 6.4 L5.3 9.2 L9.9 3.6" fill="none" stroke="#2d4b8e" stroke-width="2.1"/></svg>
<div class="a t" id="t47" style="letter-spacing:-0.731px;left:621.80px;top:269.00px;font-size:12px;line-height:12px;color:#1e1e24;">9223372036854017653</div>
<div class="a" style="left:621px;top:284px;width:1269px;height:17px;background:#abd0f5;"></div>
<svg class="a" style="left:607px;top:286px;" width="13" height="13" viewBox="0 0 13 13"><rect x="0.65" y="0.65" width="11.7" height="11.7" fill="#fff" stroke="#5c5c5c" stroke-width="1.3"/><rect x="2" y="2" width="9" height="9" fill="#f2f2f2"/><path d="M2.9 6.4 L5.3 9.2 L9.9 3.6" fill="none" stroke="#2d4b8e" stroke-width="2.1"/></svg>
<div class="a" style="left:605px;top:775px;width:85px;height:25px;background:#ffffff;border:1px solid #8b9bb0;box-sizing:border-box;border-radius:3px;"></div>
<div class="a" style="left:698px;top:775px;width:81px;height:25px;background:#ffffff;border:1px solid #8b9bb0;box-sizing:border-box;border-radius:3px;"></div>
<div class="a" style="left:787px;top:775px;width:79px;height:25px;background:#ffffff;border:1px solid #8b9bb0;box-sizing:border-box;border-radius:3px;"></div>
<div class="a" style="left:874px;top:775px;width:73px;height:25px;background:#ffffff;border:1px solid #8b9bb0;box-sizing:border-box;border-radius:3px;"></div>
<div class="a" style="left:955px;top:775px;width:70px;height:25px;background:#ffffff;border:1px solid #8b9bb0;box-sizing:border-box;border-radius:3px;"></div>
<div class="a" style="left:1033px;top:775px;width:72px;height:25px;background:#ffffff;border:1px solid #8b9bb0;box-sizing:border-box;border-radius:3px;"></div>
<div class="a" style="left:1113px;top:775px;width:87px;height:25px;background:#ffffff;border:1px solid #8b9bb0;box-sizing:border-box;border-radius:3px;"></div>
<div class="a t" id="t48" style="letter-spacing:-0.228px;left:616.90px;top:782.23px;font-size:12.2px;line-height:12.2px;color:#1c98bd;">Delete rows</div>
<div class="a t" id="t49" style="letter-spacing:-0.283px;left:709.70px;top:782.23px;font-size:12.2px;line-height:12.2px;color:#1c98bd;">Insert rows</div>
<div class="a t" id="t50" style="letter-spacing:-0.553px;left:799.10px;top:782.23px;font-size:12.2px;line-height:12.2px;color:#1c98bd;">Clear Cells</div>
<div class="a t" id="t51" style="letter-spacing:-0.256px;left:885.80px;top:782.23px;font-size:12.2px;line-height:12.2px;color:#1c98bd;">Fill Down</div>
<div class="a t" id="t52" style="letter-spacing:-0.237px;left:966.90px;top:782.23px;font-size:12.2px;line-height:12.2px;color:#1c98bd;">Fill Right</div>
<div class="a t" id="t53" style="letter-spacing:-0.252px;left:1044.80px;top:782.23px;font-size:12.2px;line-height:12.2px;color:#1c98bd;">Select All</div>
<div class="a t" id="t54" style="letter-spacing:-0.393px;left:1124.70px;top:782.23px;font-size:12.2px;line-height:12.2px;color:#1c98bd;">Select None</div>
<svg class="a" style="left:1208px;top:781px;" width="13" height="13" viewBox="0 0 13 13"><rect x="0.65" y="0.65" width="11.7" height="11.7" fill="#fff" stroke="#5c5c5c" stroke-width="1.3"/><rect x="2" y="2" width="9" height="9" fill="#f2f2f2"/><path d="M2.9 6.4 L5.3 9.2 L9.9 3.6" fill="none" stroke="#2d4b8e" stroke-width="2.1"/></svg>
<div class="a t" id="t55" style="letter-spacing:-0.152px;left:1224.70px;top:782.23px;font-size:12.2px;line-height:12.2px;color:#1e1e24;">Recognize grid content as plain text</div>
<div class="a t" id="t56" style="letter-spacing:-0.868px;left:1490.00px;top:782.23px;font-size:12.2px;line-height:12.2px;color:#1e1e24;">Row 3</div>
<div class="a t" id="t57" style="letter-spacing:-0.311px;left:416.20px;top:790.73px;font-size:12.2px;line-height:12.2px;color:#1784c2;">Learn about data sources</div>
<svg class="a" style="left:554px;top:792px;" width="8" height="8" viewBox="0 0 8 8"><rect x="0.6" y="0.6" width="6.8" height="6.8" fill="none" stroke="#1f7fc0" stroke-width="1.2"/><path d="M2.5 5.5 L6 2 M3.5 2 H6 V4.5" fill="none" stroke="#1f7fc0" stroke-width="1.2"/></svg>
<div class="a" style="left:416px;top:809px;width:1487px;height:73px;background:#ffffff;border:1px solid #6e6e6e;box-sizing:border-box;border-bottom:none;"></div>
<div class="a" style="left:418px;top:829px;width:1476px;height:1px;background:#6e6e6e;"></div>
<div class="a t" id="t58" style="letter-spacing:-0.852px;left:1141.90px;top:814.73px;font-size:12.2px;line-height:12.2px;color:#1e1e24;">PetID</div>
<div class="a" style="left:1894px;top:810px;width:8px;height:19px;background:#6e6e6e;"></div>
<svg class="a" style="left:1895px;top:811px;" width="6" height="17" viewBox="0 0 6 17"><rect x="0" y="0" width="6" height="17" rx="2" fill="#dedede"/><path d="M0.5 3.5 H5.5 M0.5 5.5 H5.5 M3 5.5 V8.5" stroke="#1a1a1a" stroke-width="1"/><path d="M1.5 8.2 L5.6 11.8 L5.6 8.2Z" fill="#1a1a1a"/><path d="M0.3 9.5 H1.6" stroke="#1a1a1a" stroke-width="1"/></svg>
<div class="a" style="left:1894px;top:829px;width:8px;height:53px;background:#b8bfcc;"></div>
<div class="a" style="left:417px;top:847px;width:1477px;height:1px;background:#ebebeb;"></div>
<div class="a t" id="t59" style="letter-spacing:-0.731px;left:417.40px;top:832.90px;font-size:12px;line-height:12px;color:#1e1e24;">9223372036854017647</div>
<div class="a" style="left:417px;top:865px;width:1477px;height:1px;background:#ebebeb;"></div>
<div class="a t" id="t60" style="letter-spacing:-0.731px;left:417.40px;top:850.90px;font-size:12px;line-height:12px;color:#1e1e24;">9223372036854017648</div>
<div class="a" style="left:417px;top:883px;width:1477px;height:1px;background:#ebebeb;"></div>
<div class="a t" id="t61" style="letter-spacing:-0.731px;left:417.40px;top:868.90px;font-size:12px;line-height:12px;color:#1e1e24;">9223372036854017652</div>
<div class="a" style="left:0px;top:565px;width:401px;height:317px;background:#ffffff;"></div>
<div class="a" style="left:0px;top:570px;width:402px;height:235px;background:#ffffff;border-top:1px solid #d4d4d4;border-right:1px solid #d4d4d4;border-bottom:1px solid #e2e2e2;box-sizing:border-box;"></div>
<svg class="a" style="left:1px;top:580px;" width="10" height="9" viewBox="0 0 10 9"><rect x="0.5" y="0.5" width="8.5" height="8" fill="none" stroke="#6d7c91" stroke-width="1"/><path d="M2.2 4.5 H7.3" stroke="#6d7c91" stroke-width="1"/></svg>
<div class="a t" id="t62" style="letter-spacing:-0.302px;left:13.90px;top:579.40px;font-size:12px;line-height:12px;color:#24242c;">DataSource Properties</div>
<div class="a" style="left:1px;top:597px;width:392px;height:207px;background:#ffffff;border:1px solid #7d8ca3;box-sizing:border-box;"></div>
<div class="a" style="left:2px;top:598px;width:390px;height:24px;background:#e8ebef;"></div>
<div class="a" style="left:2px;top:622px;width:390px;height:1px;background:#d6d6d6;"></div>
<div class="a" style="left:2px;top:645px;width:390px;height:1px;background:#d6d6d6;"></div>
<div class="a" style="left:2px;top:669px;width:390px;height:1px;background:#d6d6d6;"></div>
<div class="a" style="left:2px;top:693px;width:390px;height:1px;background:#d6d6d6;"></div>
<div class="a" style="left:2px;top:717px;width:390px;height:1px;background:#d6d6d6;"></div>
<div class="a" style="left:2px;top:741px;width:390px;height:1px;background:#d6d6d6;"></div>
<div class="a" style="left:193px;top:598px;width:1px;height:144px;background:#d6d6d6;"></div>
<div class="a t" id="t63" style="letter-spacing:-0.100px;left:10.70px;top:604.90px;font-size:12px;line-height:12px;color:#66666c;">Property</div>
<div class="a t" id="t64" style="letter-spacing:-0.188px;left:202.40px;top:604.90px;font-size:12px;line-height:12px;color:#66666c;">Value</div>
<div class="a t" id="t65" style="letter-spacing:-0.019px;left:10.70px;top:629.10px;font-size:12px;line-height:12px;color:#66666c;">Name</div>
<div class="a t" id="t66" style="letter-spacing:-0.404px;left:202.80px;top:629.10px;font-size:12px;line-height:12px;color:#1e1e24;">Data Source</div>
<div class="a t" id="t67" style="letter-spacing:-0.057px;left:10.70px;top:652.10px;font-size:12px;line-height:12px;color:#66666c;">Description</div>
<div class="a t" id="t68" style="letter-spacing:-0.340px;left:10.70px;top:676.10px;font-size:12px;line-height:12px;color:#66666c;">DataSource Type</div>
<div class="a t" id="t69" style="letter-spacing:-0.471px;left:202.80px;top:676.10px;font-size:12px;line-height:12px;color:#66666c;">Grid</div>
<div class="a t" id="t70" style="letter-spacing:-0.252px;left:10.70px;top:700.10px;font-size:12px;line-height:12px;color:#66666c;">Records Per Iteration</div>
<div class="a t" id="t71" style="left:202.80px;top:700.10px;font-size:12px;line-height:12px;color:#66666c;">1</div>
<div class="a t" id="t72" style="letter-spacing:-0.093px;left:10.70px;top:724.10px;font-size:12px;line-height:12px;color:#66666c;">Complete Last Operation</div>
<div class="a t" id="t73" style="letter-spacing:-0.009px;left:202.80px;top:724.10px;font-size:12px;line-height:12px;color:#66666c;">true</div>
<div class="a" style="left:0px;top:810px;width:402px;height:72px;background:#ffffff;border-top:1px solid #d4d4d4;border-right:1px solid #d4d4d4;box-sizing:border-box;"></div>
<svg class="a" style="left:1px;top:820px;" width="10" height="9" viewBox="0 0 10 9"><rect x="0.5" y="0.5" width="8.5" height="8" fill="none" stroke="#6d7c91" stroke-width="1"/><path d="M2.2 4.5 H7.3" stroke="#6d7c91" stroke-width="1"/></svg>
<div class="a t" id="t74" style="letter-spacing:-0.237px;left:14.10px;top:819.40px;font-size:12px;line-height:12px;color:#24242c;">Custom Data Source Test Step Properties</div>
<svg class="a" style="left:9px;top:844px;" width="10" height="10" viewBox="0 0 10 10"><path d="M5 0 V10 M0 5 H10" stroke="#1f2329" stroke-width="2.2"/></svg>
<svg class="a" style="left:34px;top:847px;" width="8" height="5" viewBox="0 0 8 5"><path d="M0.6 4.4 L4 1 L7.4 4.4" fill="none" stroke="#c5cad3" stroke-width="1.4"/></svg>
<svg class="a" style="left:54px;top:847px;" width="8" height="5" viewBox="0 0 8 5"><path d="M0.6 0.8 L4 4.2 L7.4 0.8" fill="none" stroke="#c5cad3" stroke-width="1.4"/></svg>
<svg class="a" style="left:76px;top:843px;" width="13" height="12" viewBox="0 0 13 12"><path d="M2.6 0 V10.5 M0.4 8.2 L2.6 11 L4.8 8.2" fill="none" stroke="#1f2329" stroke-width="1.6"/><text x="9.5" y="5" font-family="Liberation Sans" font-weight="700" font-size="5.6" fill="#1f2329" text-anchor="middle">A</text><text x="9.5" y="11.6" font-family="Liberation Sans" font-weight="700" font-size="5.6" fill="#1f2329" text-anchor="middle">Z</text></svg>
<svg class="a" style="left:100px;top:844px;" width="13" height="12" viewBox="0 0 13 12"><path d="M7 0.9 L12.3 6.1 L7.9 10.5 H3.7 L1 7.8 Z" fill="#fff" stroke="#1f2329" stroke-width="1.3" stroke-linejoin="round"/><path d="M7 0.9 L12.3 6.1 L8.5 9.9 L3.3 4.6 Z" fill="#1f2329"/><path d="M7.9 10.6 H12.8" stroke="#1f2329" stroke-width="1.3"/></svg>
<svg class="a" style="left:120px;top:843px;" width="12" height="12" viewBox="0 0 12 12"><path d="M3.5 3.5 V1 H8.5 L11.4 3.9 V11.4 H3.5 V8" fill="none" stroke="#1f2329" stroke-width="1.1"/><path d="M0 6 H7.5 M5.5 4 L7.6 6 L5.5 8" fill="none" stroke="#1f2329" stroke-width="1.1"/></svg>
<svg class="a" style="left:140px;top:843px;" width="14" height="12" viewBox="0 0 14 12"><path d="M0 0.5 H6.5 L9.5 3.5 V5.2 H6 V7.2 H9.5 V11.5 H0 Z" fill="#1f2329"/><path d="M6.5 6.2 H12.5 M10.6 4.2 L12.8 6.2 L10.6 8.2" fill="none" stroke="#1f2329" stroke-width="1.3"/></svg>
<svg class="a" style="left:161px;top:843px;" width="10" height="12" viewBox="0 0 10 12"><path d="M0.3 2.3 H9.7 M3.3 2.3 V0.8 H6.7 V2.3" fill="none" stroke="#c5cad3" stroke-width="1"/><path d="M1.2 2.5 L1.8 11.3 H8.2 L8.8 2.5" fill="none" stroke="#c5cad3" stroke-width="1.1"/><path d="M3.8 4.5 V9.5 M6.2 4.5 V9.5" stroke="#c5cad3" stroke-width="1"/></svg>
<div class="a" style="left:1px;top:862px;width:392px;height:20px;background:#e8ebef;border:1px solid #7d8ca3;border-bottom:none;box-sizing:border-box;"></div>
<div class="a" style="left:197px;top:863px;width:1px;height:19px;background:#d6d6d6;"></div>
<div class="a t" id="t75" style="letter-spacing:-0.152px;left:10.90px;top:870.00px;font-size:12px;line-height:12px;color:#66666c;">Name</div>
<div class="a t" id="t76" style="letter-spacing:-0.188px;left:206.40px;top:870.00px;font-size:12px;line-height:12px;color:#66666c;">Value</div>
</body></html>
